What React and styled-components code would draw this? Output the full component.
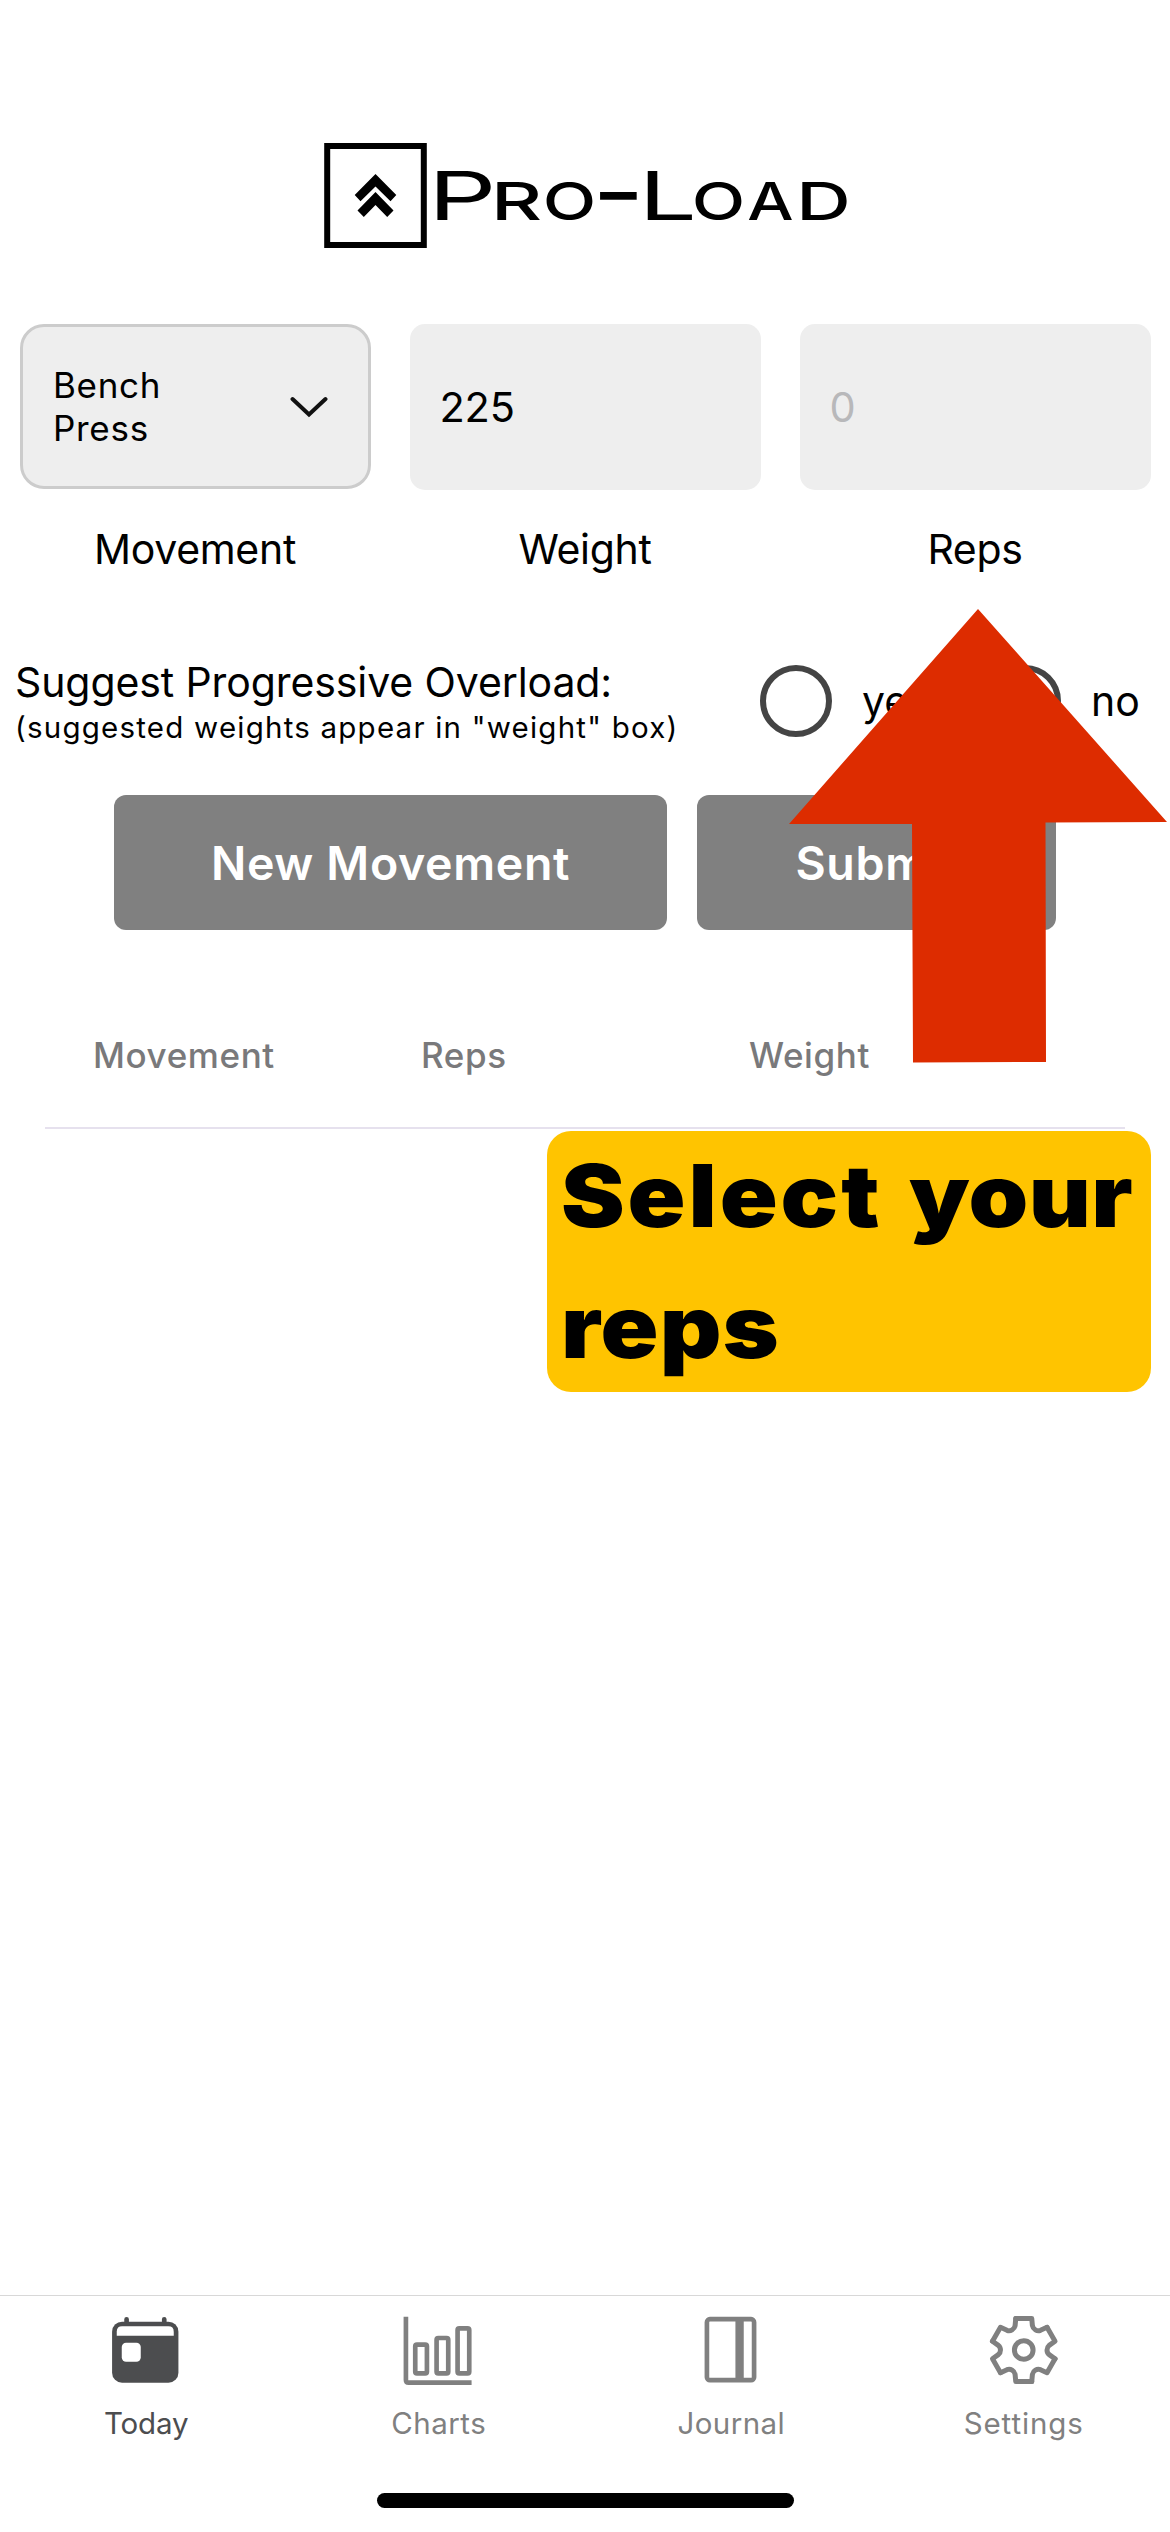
import React from "react";
import styled, { createGlobalStyle } from "styled-components";

const GlobalStyle = createGlobalStyle`
  * { box-sizing: border-box; }
  body { margin: 0; background: #fff; }
`;

const Screen = styled.div`
  position: relative;
  display: flex;
  flex-direction: column;
  width: 1170px;
  height: 2532px;
  overflow: hidden;
  background: #fff;
  color: #000;
  font-family: Inter, "Liberation Sans", sans-serif;
`;

const Header = styled.header`
  display: flex;
  justify-content: center;
  height: 324px;
  padding-top: 143px;
`;

const LogoArt = styled.svg`
  display: block;
  width: 566px;
  height: 105px;
  overflow: visible;
`;

const LogoLetter = styled.text`
  font-family: Inter, "Liberation Sans", sans-serif;
  font-size: ${(p) => p.$size}px;
  font-weight: ${(p) => p.$weight};
`;

const Fields = styled.section`
  display: grid;
  grid-template-columns: repeat(3, 390px);
`;

const Field = styled.label`
  display: flex;
  flex-direction: column;
  align-items: center;
`;

const FieldFrame = styled.div`
  display: flex;
  height: 166px;
  align-items: flex-start;
`;

const SelectBox = styled.div`
  display: flex;
  align-items: center;
  justify-content: space-between;
  width: 351px;
  height: 165px;
  padding: 0 40px 0 30.5px;
  border: 3px solid #ccc;
  border-radius: 24px;
  background: #eee;
`;

const SelectValue = styled.span`
  width: 130px;
  padding-top: 1px;
  font-size: 35px;
  line-height: 43px;
  letter-spacing: 0.7px;
`;

const NumberInput = styled.input`
  width: 351px;
  height: 166px;
  padding: 0 0 0 30px;
  border: 0;
  border-radius: 15px;
  outline: 0;
  background: #eee;
  color: #000;
  font: 400 41.5px Inter, "Liberation Sans", sans-serif;
  letter-spacing: -0.2px;
  &::placeholder { color: #b8b8ba; opacity: 1; }
`;

const FieldLabel = styled.span`
  margin-top: 33px;
  font-size: 41px;
  line-height: 52px;
  letter-spacing: -0.3px;
`;

const OverloadRow = styled.section`
  display: flex;
  align-items: center;
  height: 90px;
  margin-top: 81px;
  padding-left: 15px;
`;

const OverloadText = styled.div`
  flex: none;
  width: 745px;
`;

const OverloadTitle = styled.div`
  font-size: 41px;
  line-height: 53px;
  letter-spacing: -0.1px;
  white-space: nowrap;
`;

const OverloadHint = styled.div`
  font-size: 29.5px;
  line-height: 37px;
  letter-spacing: 1.22px;
  white-space: nowrap;
`;

const Choice = styled.label`
  display: flex;
  flex: none;
  align-items: center;
  gap: 30px;
  width: ${(p) => p.$width}px;
  font-size: 41px;
  line-height: 50px;
`;

const RadioRing = styled.span`
  flex: none;
  width: 72px;
  height: 72px;
  border: 6px solid #444;
  border-radius: 50%;
`;

const Actions = styled.div`
  display: flex;
  justify-content: center;
  gap: 30px;
  margin-top: 49px;
`;

const ActionButton = styled.button`
  width: ${(p) => p.$width}px;
  height: 135px;
  padding: 0;
  border: 0;
  border-radius: 12px;
  background: #808080;
  color: #fff;
  font: 600 46.5px Inter, "Liberation Sans", sans-serif;
  letter-spacing: 0.65px;
`;

const TableHead = styled.div`
  display: grid;
  grid-template-columns: repeat(3, 328px);
  align-items: center;
  height: 145px;
  margin: 54px 45px 0;
  padding: 0 48px 2px;
  border-bottom: 2px solid #e6e1ee;
  color: #79797b;
  font-size: 35px;
  font-weight: 500;
  letter-spacing: 0.6px;
`;

const Spacer = styled.main`
  flex: 1;
`;

const TabBar = styled.nav`
  display: grid;
  grid-template-columns: repeat(4, 1fr);
  height: 237px;
  border-top: 1px solid #d8d8d8;
`;

const Tab = styled.a`
  display: flex;
  flex-direction: column;
  align-items: center;
  gap: 19px;
  padding-top: 18px;
  color: ${(p) => (p.$active ? "#4c4d4f" : "#808080")};
`;

const TabIcon = styled.svg`
  display: block;
  width: 72px;
  height: 72px;
`;

const TabLabel = styled.span`
  font-size: 29.5px;
  line-height: 36px;
  letter-spacing: ${(p) => p.$spacing}px;
`;

const HomeIndicator = styled.div`
  position: absolute;
  left: 377px;
  bottom: 24px;
  width: 417px;
  height: 15px;
  border-radius: 8px;
  background: #000;
`;

const Arrow = styled.svg`
  position: absolute;
  left: 780px;
  top: 600px;
  width: 390px;
  height: 470px;
`;

const Callout = styled.div`
  position: absolute;
  left: 547px;
  top: 1131px;
  width: 604px;
  height: 261px;
  padding: 0 0 0 14px;
  border-radius: 24px;
  background: #ffc400;
`;

const CalloutText = styled.div`
  width: 535px;
  font-size: 87px;
  font-weight: 900;
  line-height: 130.5px;
  word-spacing: 7px;
  transform: scaleX(1.1);
  transform-origin: left;
`;

const Word = styled.span`
  letter-spacing: ${(p) => p.$spacing}px;
`;

/* glyph, font size, left bearing, natural ink width, ink left edge, ink width */
const wordmark = [
  ["P", 67, 5, 35, 436, 56],
  ["R", 52, 4, 29, 497, 44],
  ["O", 52, 2.5, 35, 546, 47],
  ["-", 67, 4, 23, 599, 38],
  ["L", 67, 5, 30, 646.5, 46],
  ["O", 52, 2.5, 35, 695, 47],
  ["A", 52, 1, 35, 748.5, 44],
  ["D", 52, 4, 31, 802, 45],
];

function letterWeight(glyph, size) {
  if (glyph === "-") return 700;
  return size > 60 ? 400 : 500;
}

function Logo() {
  return (
    <LogoArt viewBox="302 143 566 105">
      <rect x="327.2" y="146" width="96.6" height="99" fill="none" stroke="#000" strokeWidth="6" />
      <path d="M375.5 174 L396.3 195 L390.5 201.3 L375.5 186.5 L360.5 201.3 L354.7 195 Z" />
      <path d="M375.5 192 L393.5 210.5 L387.2 217 L375.5 205 L363.8 217 L357.5 210.5 Z" />
      {wordmark.map(([glyph, size, bearing, ink, x, width], i) => {
        const sx = width / ink;
        const y = glyph === "-" ? 216 : 220.4;
        return (
          <LogoLetter
            key={i}
            $size={size}
            $weight={letterWeight(glyph, size)}
            transform={`translate(${x - bearing * sx} ${y}) scale(${sx} 1)`}
          >
            {glyph}
          </LogoLetter>
        );
      })}
    </LogoArt>
  );
}

function Chevron() {
  return (
    <svg width="38" height="22" viewBox="0 0 38 22" fill="none" stroke="#111" strokeWidth="4" strokeLinecap="round">
      <path d="M2.5 3 L19 18.5 L35.5 3" />
    </svg>
  );
}

function TodayIcon() {
  return (
    <TabIcon viewBox="150.75 102 216 216" fill="currentColor">
      <path d="M200.5 118 V130 M313.5 118 V130" stroke="currentColor" strokeWidth="14" strokeLinecap="round" />
      <rect x="157" y="125" width="199" height="183" rx="30" />
      <path d="M171 167 V155 Q171 139 187 139 H326 Q342 139 342 155 V167 Z" fill="#fff" />
      <rect x="186" y="188" width="57" height="57" rx="13" fill="#fff" />
    </TabIcon>
  );
}

function ChartsIcon() {
  return (
    <TabIcon viewBox="128.25 102 216 216" fill="none" stroke="currentColor" strokeWidth="14">
      <path d="M137 110 V300 Q137 308 145 308 H334" />
      <rect x="165" y="194" width="35" height="86" rx="5" />
      <rect x="229" y="174" width="35" height="106" rx="5" />
      <rect x="292" y="145" width="35" height="135" rx="5" />
    </TabIcon>
  );
}

function JournalIcon() {
  return (
    <TabIcon viewBox="135.75 102 216 216" fill="none" stroke="currentColor" strokeWidth="14">
      <rect x="171.5" y="117.5" width="141.5" height="183" rx="9" />
      <path d="M269.5 117 V300" strokeWidth="25" />
    </TabIcon>
  );
}

function SettingsIcon() {
  return (
    <TabIcon viewBox="-107.25 -108 216 216" fill="none" stroke="currentColor" strokeWidth="15" strokeLinecap="round" strokeLinejoin="round">
      <circle r="28" />
      {[0, 60, 120, 180, 240, 300].map((angle) => (
        <path
          key={angle}
          transform={`rotate(${angle})`}
          d="M-24 -94.5 H24 L26 -73 C28 -62 39.7 -55.2 50.2 -59 L69.8 -68"
        />
      ))}
    </TabIcon>
  );
}

const tabs = [
  { label: "Today", Icon: TodayIcon, spacing: -0.1, active: true },
  { label: "Charts", Icon: ChartsIcon, spacing: 0.5 },
  { label: "Journal", Icon: JournalIcon, spacing: 0.4 },
  { label: "Settings", Icon: SettingsIcon, spacing: 0.9 },
];

export default function App() {
  return (
    <Screen>
      <GlobalStyle />
      <Header>
        <Logo />
      </Header>

      <Fields>
        <Field>
          <FieldFrame>
            <SelectBox>
              <SelectValue>Bench Press</SelectValue>
              <Chevron />
            </SelectBox>
          </FieldFrame>
          <FieldLabel>Movement</FieldLabel>
        </Field>
        <Field>
          <FieldFrame>
            <NumberInput defaultValue="225" />
          </FieldFrame>
          <FieldLabel>Weight</FieldLabel>
        </Field>
        <Field>
          <FieldFrame>
            <NumberInput placeholder="0" />
          </FieldFrame>
          <FieldLabel>Reps</FieldLabel>
        </Field>
      </Fields>

      <OverloadRow>
        <OverloadText>
          <OverloadTitle>Suggest Progressive Overload:</OverloadTitle>
          <OverloadHint>(suggested weights appear in "weight" box)</OverloadHint>
        </OverloadText>
        <Choice $width={229}>
          <RadioRing />
          yes
        </Choice>
        <Choice $width={170}>
          <RadioRing />
          no
        </Choice>
      </OverloadRow>

      <Actions>
        <ActionButton $width={553}>New Movement</ActionButton>
        <ActionButton $width={359}>Submit</ActionButton>
      </Actions>

      <TableHead>
        <span>Movement</span>
        <span>Reps</span>
        <span>Weight</span>
      </TableHead>

      <Spacer />

      <TabBar>
        {tabs.map(({ label, Icon, spacing, active }) => (
          <Tab key={label} $active={active}>
            <Icon />
            <TabLabel $spacing={spacing}>{label}</TabLabel>
          </Tab>
        ))}
      </TabBar>

      <Arrow viewBox="780 600 390 470">
        <path d="M978 609 L1167 822 L1045.5 822.5 L1046 1062 L913 1062.5 L912 824 L789 824 Z" fill="#dd2c00" />
      </Arrow>
      <Callout>
        <CalloutText>
          <Word $spacing={2.6}>Select</Word> <Word $spacing={0.3}>your</Word>{" "}
          <Word $spacing={1}>reps</Word>
        </CalloutText>
      </Callout>
      <HomeIndicator />
    </Screen>
  );
}
